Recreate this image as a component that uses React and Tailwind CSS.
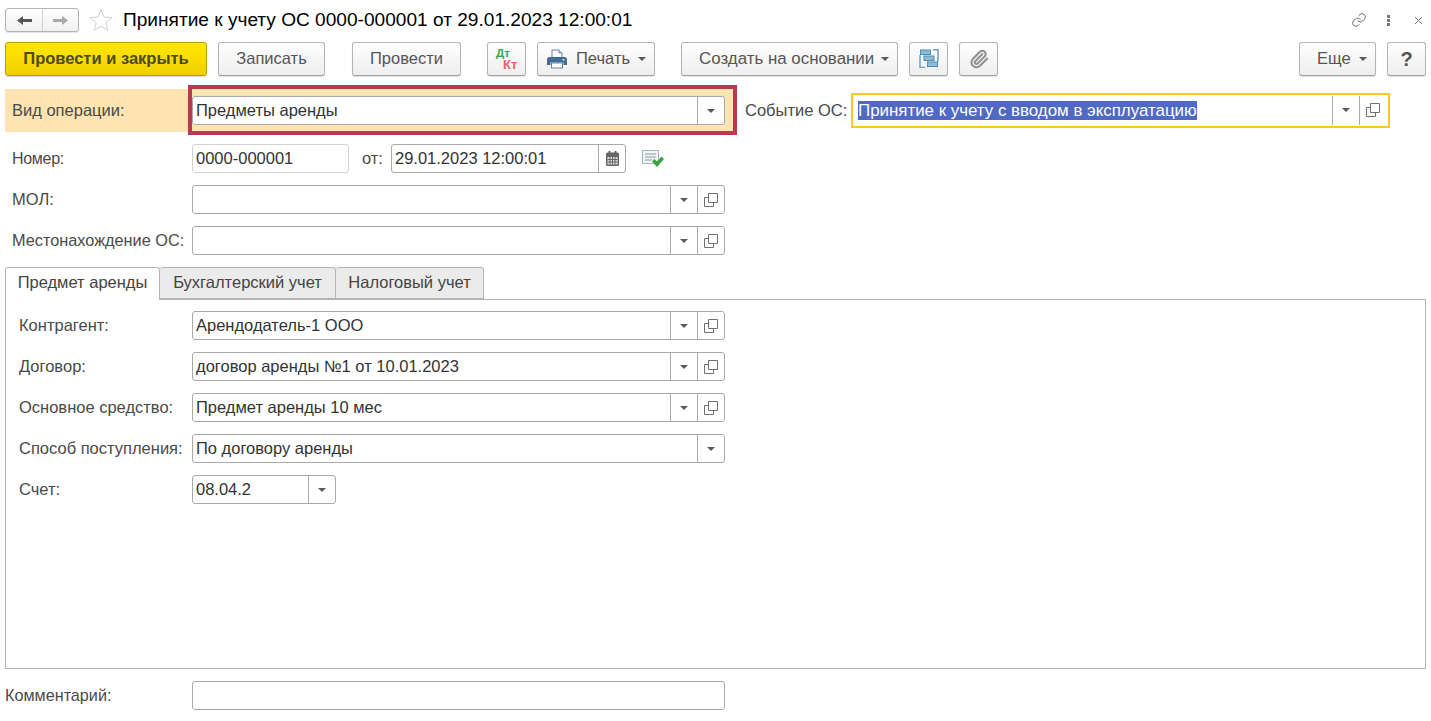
import React from 'react';
import { Paperclip } from 'lucide-react';

const FONT = { fontFamily: '"Liberation Sans", Arial, sans-serif' };

const btn =
  'flex items-center justify-center h-[34px] pb-[1px] rounded-[3px] border border-[#b4b4b4] border-b-[#a0a0a0] bg-gradient-to-b from-[#ffffff] to-[#eeeeee] text-[16.5px] text-[#555555] shadow-[0_1px_1px_rgba(0,0,0,0.12)]';

function Caret({ className = '' }) {
  return (
    <svg width="8" height="4" viewBox="0 0 8 4" className={className}>
      <path d="M0 0h8L4 4z" fill="#5a5a5a" />
    </svg>
  );
}

function OpenIcon() {
  return (
    <svg width="14" height="14" viewBox="0 0 14 14" fill="none" stroke="#707070" strokeWidth="1" className="-ml-[1px]">
      <path d="M4.500 0.500h9v9h-9z" />
      <path d="M4.500 4.500h-4v9h9v-4" />
    </svg>
  );
}

function CalendarIcon() {
  return (
    <svg width="13" height="15" viewBox="0 0 13 15">
      <rect x="0" y="1.500" width="13" height="13.500" rx="1.500" fill="#666666" />
      <rect x="2.500" y="0" width="2" height="3" fill="#666666" />
      <rect x="8.500" y="0" width="2" height="3" fill="#666666" />
      <rect x="1.500" y="6" width="10" height="7.500" fill="#dddddd" />
      <path d="M1.500 8.500h10M1.500 11h10M4 6v7.500M6.500 6v7.500M9 6v7.500" stroke="#666666" strokeWidth="1" />
    </svg>
  );
}

function Field({ width, value, caret, open, light, calendar }) {
  return (
    <div
      className={`flex h-[29px] shrink-0 rounded-[3px] border bg-white ${light ? 'border-[#d2d2d2]' : 'border-[#a9a9a9]'} ${width}`}
    >
      <div className="flex-1 pl-[3px] leading-[26px] text-[#333333] text-[16.5px] whitespace-nowrap overflow-hidden">
        {value}
      </div>
      {caret && (
        <div className="flex w-[27px] items-center justify-center border-l border-[#a9a9a9]">
          <Caret />
        </div>
      )}
      {open && (
        <div className="flex w-[27px] items-center justify-center border-l border-[#a9a9a9]">
          <OpenIcon />
        </div>
      )}
      {calendar && (
        <div className="flex w-[27px] items-center justify-center border-l border-[#a9a9a9]">
          <CalendarIcon />
        </div>
      )}
    </div>
  );
}

function Row({ label, labelWidth = 'w-[180px]', labelSize = 'text-[16.5px]', mt = 'mt-[12px]', children }) {
  return (
    <div className={`flex items-center ${mt}`}>
      <div className={`shrink-0 text-[#4a4a4a] whitespace-nowrap ${labelSize} ${labelWidth}`}>{label}</div>
      {children}
    </div>
  );
}

function ArrowLeft({ color }) {
  return (
    <svg width="15" height="9" viewBox="0 0 15 9">
      <path d="M0 4.500L6 0v3h9v3H6v3z" fill={color} />
    </svg>
  );
}

function ArrowRight({ color }) {
  return (
    <svg width="15" height="9" viewBox="0 0 15 9">
      <path d="M15 4.500L9 0v3H0v3h9v3z" fill={color} />
    </svg>
  );
}

function PrinterIcon() {
  return (
    <svg width="20" height="20" viewBox="0 0 20 20" className="shrink-0">
      <path d="M5 1h7l3 3v5H5z" fill="#ffffff" stroke="#6d8299" strokeWidth="1" />
      <path d="M12 1v3h3" fill="#dfe6ec" stroke="#6d8299" strokeWidth="1" />
      <path d="M2.500 8h15A2.500 2.500 0 0 1 20 10.500V16h-3.500v-2.500h-13V16H0v-5.500A2.500 2.500 0 0 1 2.500 8z" fill="#3f6d96" />
      <rect x="4.500" y="14" width="11" height="5" fill="#ffffff" stroke="#6d8299" strokeWidth="1" />
      <rect x="15.500" y="10" width="2" height="1.500" fill="#dbe6ee" />
    </svg>
  );
}

function StructureIcon() {
  return (
    <svg width="20" height="19" viewBox="0 0 20 19">
      <path d="M1 6v12.500h5M14 0.800h5v12" fill="none" stroke="#6ea3c6" strokeWidth="1.500" />
      <rect x="1.500" y="1" width="10" height="4.500" fill="#8dbbd8" stroke="#4d8cb5" strokeWidth="1" />
      <rect x="5" y="7" width="10" height="4.500" fill="#8dbbd8" stroke="#4d8cb5" strokeWidth="1" />
      <rect x="8.500" y="13" width="10" height="4.500" fill="#8dbbd8" stroke="#4d8cb5" strokeWidth="1" />
    </svg>
  );
}

function DocCheckIcon() {
  return (
    <svg width="22" height="18" viewBox="0 0 22 18">
      <rect x="0.500" y="0.500" width="16" height="13" fill="#f2f5f8" stroke="#a6b4c2" strokeWidth="1" />
      <path d="M3 4h11M3 7h11M3 10h7" stroke="#8a99a8" strokeWidth="1" />
      <path d="M10 11.500l2.500-2.500 2.500 2.500 4.500-5 2.500 2.500-7 8z" fill="#35a53a" />
    </svg>
  );
}

function LinkIcon() {
  return (
    <svg width="16" height="16" viewBox="0 0 24 24" fill="none" stroke="#707070" strokeWidth="1.500" strokeLinecap="round" strokeLinejoin="round">
      <path d="M10 13a5 5 0 0 0 7.500.500l3-3a5 5 0 0 0-7-7l-1.700 1.700" />
      <path d="M14 11a5 5 0 0 0-7.500-.500l-3 3a5 5 0 0 0 7 7l1.700-1.700" />
    </svg>
  );
}

function StarIcon() {
  return (
    <svg width="24" height="24" viewBox="0 0 24 24">
      <path d="M12 1.500l3 7.500 8 .600-6.200 5.100 2 7.800L12 18.200l-6.800 4.300 2-7.800L1 9.600l8-.600z" fill="#ffffff" stroke="#ccd2d8" strokeWidth="1" />
    </svg>
  );
}

export default function App() {
  return (
    <div className="relative w-[1431px] h-[721px] overflow-hidden bg-white px-[5px] pt-[8px]" style={FONT}>
      {/* title */}
      <div className="flex h-[24px] items-center">
        <div className="flex h-[24px] w-[74px] rounded-[3px] border border-[#b4b4b4] bg-gradient-to-b from-white to-[#f0f0f0] shadow-[0_1px_1px_rgba(0,0,0,0.12)]">
          <div className="flex w-[37px] items-center justify-center border-r border-[#d0d0d0]">
            <ArrowLeft color="#555555" />
          </div>
          <div className="flex flex-1 items-center justify-center">
            <ArrowRight color="#a8a8a8" />
          </div>
        </div>
        <div className="ml-[10px]">
          <StarIcon />
        </div>
        <div className="ml-[10px] text-[19.100px] text-black whitespace-nowrap">
          Принятие к учету ОС 0000-000001 от 29.01.2023 12:00:01
        </div>
        <div className="ml-auto flex items-center pr-[3px]">
          <LinkIcon />
          <div className="ml-[20px] flex flex-col gap-[1px]">
            <span className="h-[3px] w-[3px] bg-[#777777]" />
            <span className="h-[3px] w-[3px] bg-[#777777]" />
            <span className="h-[3px] w-[3px] bg-[#777777]" />
          </div>
          <svg className="ml-[24px]" width="9" height="9" viewBox="0 0 9 9" stroke="#777777" strokeWidth="1">
            <path d="M1 1l7 7M8 1l-7 7" />
          </svg>
        </div>
      </div>

      {/* toolbar */}
      <div className="mt-[10px] flex">
        <div className="flex h-[34px] w-[202px] items-center justify-center rounded-[3px] border border-[#b89f00] bg-gradient-to-b from-[#ffe800] to-[#f2cf00] pb-[1px] text-[16.5px] font-bold text-[#4d4a22] shadow-[0_1px_1px_rgba(0,0,0,0.15)]">
          Провести и закрыть
        </div>
        <div className={`${btn} ml-[11px] w-[107px]`}>Записать</div>
        <div className={`${btn} ml-[27px] w-[109px]`}>Провести</div>
        <div className={`${btn} ml-[26px] w-[39px] flex-col !items-start pl-[8px] font-bold leading-[11px]`}>
          <span className="text-[11.500px] text-[#2fa84f]">Дт</span>
          <span className="ml-[7px] text-[13px] text-[#f0606a]">Кт</span>
        </div>
        <div className={`${btn} ml-[11px] w-[118px] !justify-start gap-[9px] pl-[9px]`}>
          <PrinterIcon />
          <span>Печать</span>
          <Caret className="-ml-[1px]" />
        </div>
        <div className={`${btn} ml-[26px] w-[217px] !justify-start gap-[7px] pl-[17px] !text-[16.900px]`}>
          <span>Создать на основании</span>
          <Caret />
        </div>
        <div className={`${btn} ml-[11px] w-[39px]`}>
          <StructureIcon />
        </div>
        <div className={`${btn} ml-[11px] w-[39px]`}>
          <Paperclip size={20} color="#919191" strokeWidth={2.500} />
        </div>
        <div className={`${btn} ml-auto w-[77px] !justify-start gap-[8px] pl-[17px]`}>
          <span>Еще</span>
          <Caret />
        </div>
        <div className={`${btn} ml-[11px] w-[39px] !text-[20px] font-bold`}>?</div>
      </div>

      {/* operation */}
      <div className="mt-[9px] flex h-[50px] items-center">
        <div className="h-[43px] w-[183px] self-start mt-[4px] bg-[#fde4b1] pl-[7px] text-[16.5px] leading-[42px] text-[#4a4a4a]">
          Вид операции:
        </div>
        <div className="h-[50px] w-[549px] border-[4px] border-[#b93a50] bg-[#fde4b1] pt-[7px]">
          <Field width="w-[533px]" value="Предметы аренды" caret />
        </div>
        <div className="ml-[8px] w-[106px] text-[16.5px] text-[#4a4a4a]">Событие ОС:</div>
        <div className="flex h-[35px] w-[539px] border-2 border-[#fbc91f] bg-white pl-[5px] pr-[2px]">
          <div className="flex flex-1 items-center">
            <span className="bg-[#4f69c4] text-[16.900px] leading-[19px] text-white whitespace-nowrap">
              Принятие к учету с вводом в эксплуатацию
            </span>
          </div>
          <div className="my-[1px] flex w-[27px] items-center justify-center border-l border-[#a9a9a9]">
            <Caret />
          </div>
          <div className="my-[1px] flex w-[27px] items-center justify-center border-l border-[#a9a9a9]">
            <OpenIcon />
          </div>
        </div>
      </div>

      {/* header fields */}
      <div className="pl-[7px]">
        <Row label="Номер:" labelSize="text-[16px] tracking-[-0.3px]" mt="mt-[9px]">
          <Field width="w-[157px]" value="0000-000001" light />
          <span className="ml-[13px] w-[29px] text-[16.5px] text-[#4a4a4a]">от:</span>
          <Field width="w-[235px]" value="29.01.2023 12:00:01" calendar />
          <div className="ml-[16px]">
            <DocCheckIcon />
          </div>
        </Row>
        <Row label="МОЛ:">
          <Field width="w-[533px]" caret open />
        </Row>
        <Row label="Местонахождение ОС:" labelSize="text-[16.300px]">
          <Field width="w-[533px]" caret open />
        </Row>
      </div>

      {/* tabs */}
      <div className="relative z-10 mt-[12px] flex h-[33px] -mb-px">
        <div className="flex h-[33px] w-[155px] items-center justify-center rounded-t-[3px] border border-b-0 border-[#b4b4b4] bg-white pb-[4px] text-[16.5px] text-[#444444]">
          Предмет аренды
        </div>
        <div className="flex h-[32px] w-[176px] items-center justify-center rounded-t-[3px] border border-l-0 border-[#b4b4b4] bg-[#ebebeb] pb-[2px] text-[16.5px] text-[#444444]">
          Бухгалтерский учет
        </div>
        <div className="flex h-[32px] w-[148px] items-center justify-center rounded-t-[3px] border border-l-0 border-[#b4b4b4] bg-[#ebebeb] pb-[2px] text-[16.5px] text-[#444444]">
          Налоговый учет
        </div>
      </div>
      <div className="h-[370px] w-[1421px] border border-[#b4b4b4] pl-[13px] pt-[11px]">
        <Row label="Контрагент:" labelWidth="w-[173px]" mt="mt-0">
          <Field width="w-[533px]" value="Арендодатель-1 ООО" caret open />
        </Row>
        <Row label="Договор:" labelWidth="w-[173px]">
          <Field width="w-[533px]" value="договор аренды №1 от 10.01.2023" caret open />
        </Row>
        <Row label="Основное средство:" labelWidth="w-[173px]">
          <Field width="w-[533px]" value="Предмет аренды 10 мес" caret open />
        </Row>
        <Row label="Способ поступления:" labelWidth="w-[173px]">
          <Field width="w-[533px]" value="По договору аренды" caret />
        </Row>
        <Row label="Счет:" labelWidth="w-[173px]">
          <Field width="w-[144px]" value="08.04.2" caret />
        </Row>
      </div>

      {/* comment */}
      <Row label="Комментарий:" labelWidth="w-[187px]" labelSize="text-[16.200px]">
        <Field width="w-[533px]" />
      </Row>
    </div>
  );
}
